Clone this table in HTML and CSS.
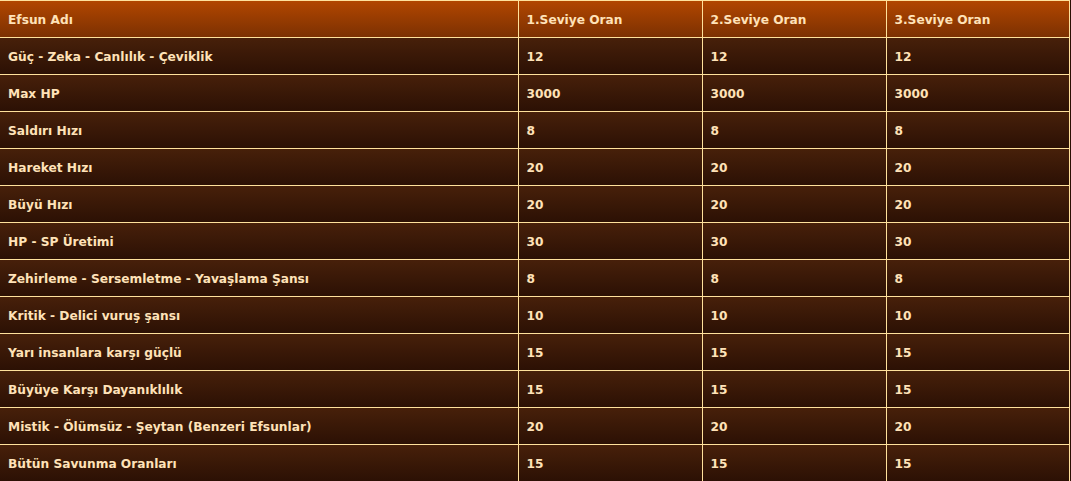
FILE: index.html
```html
<!DOCTYPE html>
<html lang="tr">
<head>
<meta charset="utf-8">
<title>Efsun Tablosu</title>
<link rel="stylesheet" href="styles.css">
</head>
<body>
<table class="efsun">
  <thead>
    <tr><th>Efsun Adı</th><th>1.Seviye Oran</th><th>2.Seviye Oran</th><th>3.Seviye Oran</th></tr>
  </thead>
  <tbody>
    <tr><td>Güç - Zeka - Canlılık - Çeviklik</td><td>12</td><td>12</td><td>12</td></tr>
    <tr><td>Max HP</td><td>3000</td><td>3000</td><td>3000</td></tr>
    <tr><td>Saldırı Hızı</td><td>8</td><td>8</td><td>8</td></tr>
    <tr><td>Hareket Hızı</td><td>20</td><td>20</td><td>20</td></tr>
    <tr><td>Büyü Hızı</td><td>20</td><td>20</td><td>20</td></tr>
    <tr><td>HP - SP Üretimi</td><td>30</td><td>30</td><td>30</td></tr>
    <tr><td>Zehirleme - Sersemletme - Yavaşlama Şansı</td><td>8</td><td>8</td><td>8</td></tr>
    <tr><td>Kritik - Delici vuruş şansı</td><td>10</td><td>10</td><td>10</td></tr>
    <tr><td>Yarı insanlara karşı güçlü</td><td>15</td><td>15</td><td>15</td></tr>
    <tr><td>Büyüye Karşı Dayanıklılık</td><td>15</td><td>15</td><td>15</td></tr>
    <tr><td>Mistik - Ölümsüz - Şeytan (Benzeri Efsunlar)</td><td>20</td><td>20</td><td>20</td></tr>
    <tr><td>Bütün Savunma Oranları</td><td>15</td><td>15</td><td>15</td></tr>
  </tbody>
</table>
</body>
</html>
```
FILE: styles.css
```css
html, body {
  margin: 0;
  padding: 0;
  background: #2a1004;
}
.efsun {
  border-collapse: collapse;
  width: 1070px;
  table-layout: fixed;
  font-family: "DejaVu Sans", Verdana, sans-serif;
  font-weight: bold;
  font-size: 12.2px;
  color: #ffe2b8;
  border-top: 1px solid #ffe19c;
  border-right: 1px solid #ffe19c;
}
.efsun th, .efsun td {
  height: 36px;
  padding: 2px 0 0 8px;
  text-align: left;
  vertical-align: middle;
  border-left: 1px solid #ffe19c;
  border-top: 1px solid #ffe19c;
  white-space: nowrap;
  box-sizing: border-box;
}
.efsun th:first-child, .efsun td:first-child {
  border-left: none;
  width: 518px;
}
.efsun th:nth-child(2), .efsun td:nth-child(2),
.efsun th:nth-child(3), .efsun td:nth-child(3) {
  width: 184px;
}
.efsun thead tr {
  background: linear-gradient(to bottom, #b24600, #7a3002);
}
.efsun tbody tr {
  background: linear-gradient(to bottom, #47200a, #2b1004);
}
.efsun th {
  font-weight: bold;
}
.efsun tr {
  height: 37px;
}
```
